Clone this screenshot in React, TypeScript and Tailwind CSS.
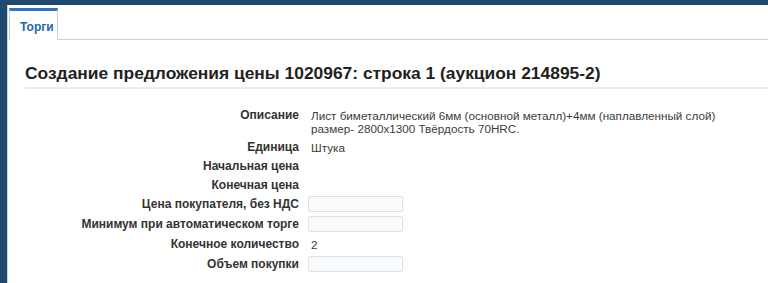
const rows: { label: string; value?: string[]; input?: boolean; h: string }[] = [
  {
    label: "Описание",
    value: [
      "Лист биметаллический 6мм (основной металл)+4мм (наплавленный слой)",
      "размер- 2800x1300 Твёрдость 70HRC.",
    ],
    h: "h-[32px]",
  },
  { label: "Единица", value: ["Штука"], h: "h-[19px]" },
  { label: "Начальная цена", h: "h-[19px]" },
  { label: "Конечная цена", h: "h-[19px]" },
  { label: "Цена покупателя, без НДС", input: true, h: "h-[20px]" },
  { label: "Минимум при автоматическом торге", input: true, h: "h-[20px]" },
  { label: "Конечное количество", value: ["2"], h: "h-[20px]" },
  { label: "Объем покупки", input: true, h: "h-[20px]" },
];

export default function App() {
  return (
    <div className="h-[283px] w-[768px] overflow-hidden bg-[#1f4a6e] pt-[5px] pl-[7px] font-['Liberation_Sans',Arial,sans-serif]">
      <div className="h-full border-l border-[#c9d3dc] bg-white pt-[3px]">
        <div className="flex items-end">
          <div className="ml-px h-[32px] w-[49px] border-t-[3px] border-r border-l border-t-[#2f76c0] border-r-[#c9d3dc] border-l-[#c9d3dc] bg-white pt-[7px] pl-[10px] text-[12px] font-bold text-[#1f66ac]">
            Торги
          </div>
          <div className="flex-1 border-b border-[#c9d3dc]" />
        </div>
        <div className="ml-[17px] mt-[22px] border-b-2 border-[#e8ecf0] pb-[3px]">
          <h1 className="text-[17.4px] font-bold leading-[22px] text-[#222]">
            Создание предложения цены 1020967: строка 1 (аукцион 214895-2)
          </h1>
        </div>
        <div className="mt-[20px] flex flex-col text-[12px] leading-[13px]">
          {rows.map((r) => (
            <div key={r.label} className={`flex ${r.h}`}>
              <div className="w-[291px] shrink-0 text-right font-bold text-[#333]">
                {r.label}
              </div>
              <div className="pl-[12px] text-[11.7px] text-[#3c3c3c]">
                {r.input ? (
                  <div className="-mt-[2px] -ml-[3px] h-[16px] w-[95px] rounded-[2px] border border-[#dde2e7] bg-[#fafbfc]" />
                ) : (
                  r.value?.map((v) => <div key={v}>{v}</div>)
                )}
              </div>
            </div>
          ))}
        </div>
      </div>
    </div>
  );
}
